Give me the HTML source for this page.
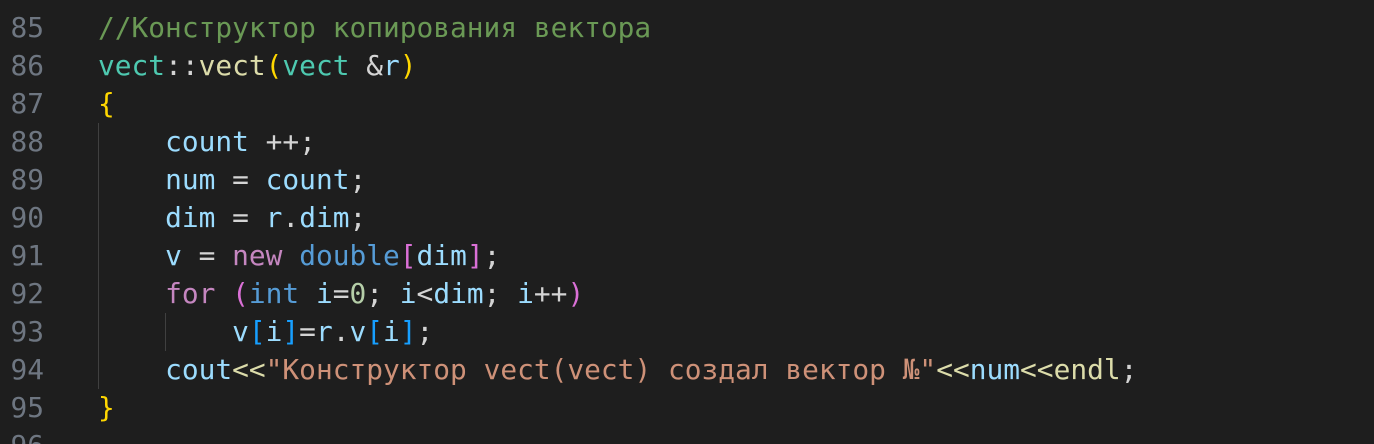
<!DOCTYPE html>
<html style="overflow:hidden;height:444px"><head><meta charset="utf-8"><style>
body{margin:0;background:#1e1e1e;width:1374px;height:444px;overflow:hidden;position:relative;font-family:"DejaVu Sans Mono","Liberation Mono",monospace;font-size:27.85px;}
.l{position:absolute;left:0;height:38px;line-height:38px;white-space:pre;color:#d4d4d4}
.n{display:inline-block;width:44px;text-align:right;color:#6e7681;margin-right:54px}
.c{color:#6a9955}.t{color:#4ec9b0}.f{color:#dcdcaa}.v{color:#9cdcfe}.k{color:#c586c0}.b{color:#569cd6}.s{color:#ce9178}.num{color:#b5cea8}.g{color:#ffd700}.p{color:#da70d6}.bl{color:#179fff}
.guide{position:absolute;width:1px;background:#404040}
</style></head><body>
<div class="guide" style="left:98px;top:123px;height:266px"></div>
<div class="guide" style="left:165px;top:313px;height:38px"></div>
<div class="l" style="top:9px"><span class="n">85</span><span class="c">//Конструктор копирования вектора</span></div>
<div class="l" style="top:47px"><span class="n">86</span><span class="t">vect</span>::<span class="f">vect</span><span class="g">(</span><span class="t">vect</span> &amp;<span class="v">r</span><span class="g">)</span></div>
<div class="l" style="top:85px"><span class="n">87</span><span class="g">{</span></div>
<div class="l" style="top:123px"><span class="n">88</span>    <span class="v">count</span> ++;</div>
<div class="l" style="top:161px"><span class="n">89</span>    <span class="v">num</span> = <span class="v">count</span>;</div>
<div class="l" style="top:199px"><span class="n">90</span>    <span class="v">dim</span> = <span class="v">r</span>.<span class="v">dim</span>;</div>
<div class="l" style="top:237px"><span class="n">91</span>    <span class="v">v</span> = <span class="k">new</span> <span class="b">double</span><span class="p">[</span><span class="v">dim</span><span class="p">]</span>;</div>
<div class="l" style="top:275px"><span class="n">92</span>    <span class="k">for</span> <span class="p">(</span><span class="b">int</span> <span class="v">i</span>=<span class="num">0</span>; <span class="v">i</span>&lt;<span class="v">dim</span>; <span class="v">i</span>++<span class="p">)</span></div>
<div class="l" style="top:313px"><span class="n">93</span>        <span class="v">v</span><span class="bl">[</span><span class="v">i</span><span class="bl">]</span>=<span class="v">r</span>.<span class="v">v</span><span class="bl">[</span><span class="v">i</span><span class="bl">]</span>;</div>
<div class="l" style="top:351px"><span class="n">94</span>    <span class="v">cout</span><span class="f">&lt;&lt;</span><span class="s">"Конструктор vect(vect) создал вектор №"</span><span class="f">&lt;&lt;</span><span class="v">num</span><span class="f">&lt;&lt;</span><span class="f">endl</span>;</div>
<div class="l" style="top:389px"><span class="n">95</span><span class="g">}</span></div>
<div class="l" style="top:427px"><span class="n">96</span></div>
</body></html>
